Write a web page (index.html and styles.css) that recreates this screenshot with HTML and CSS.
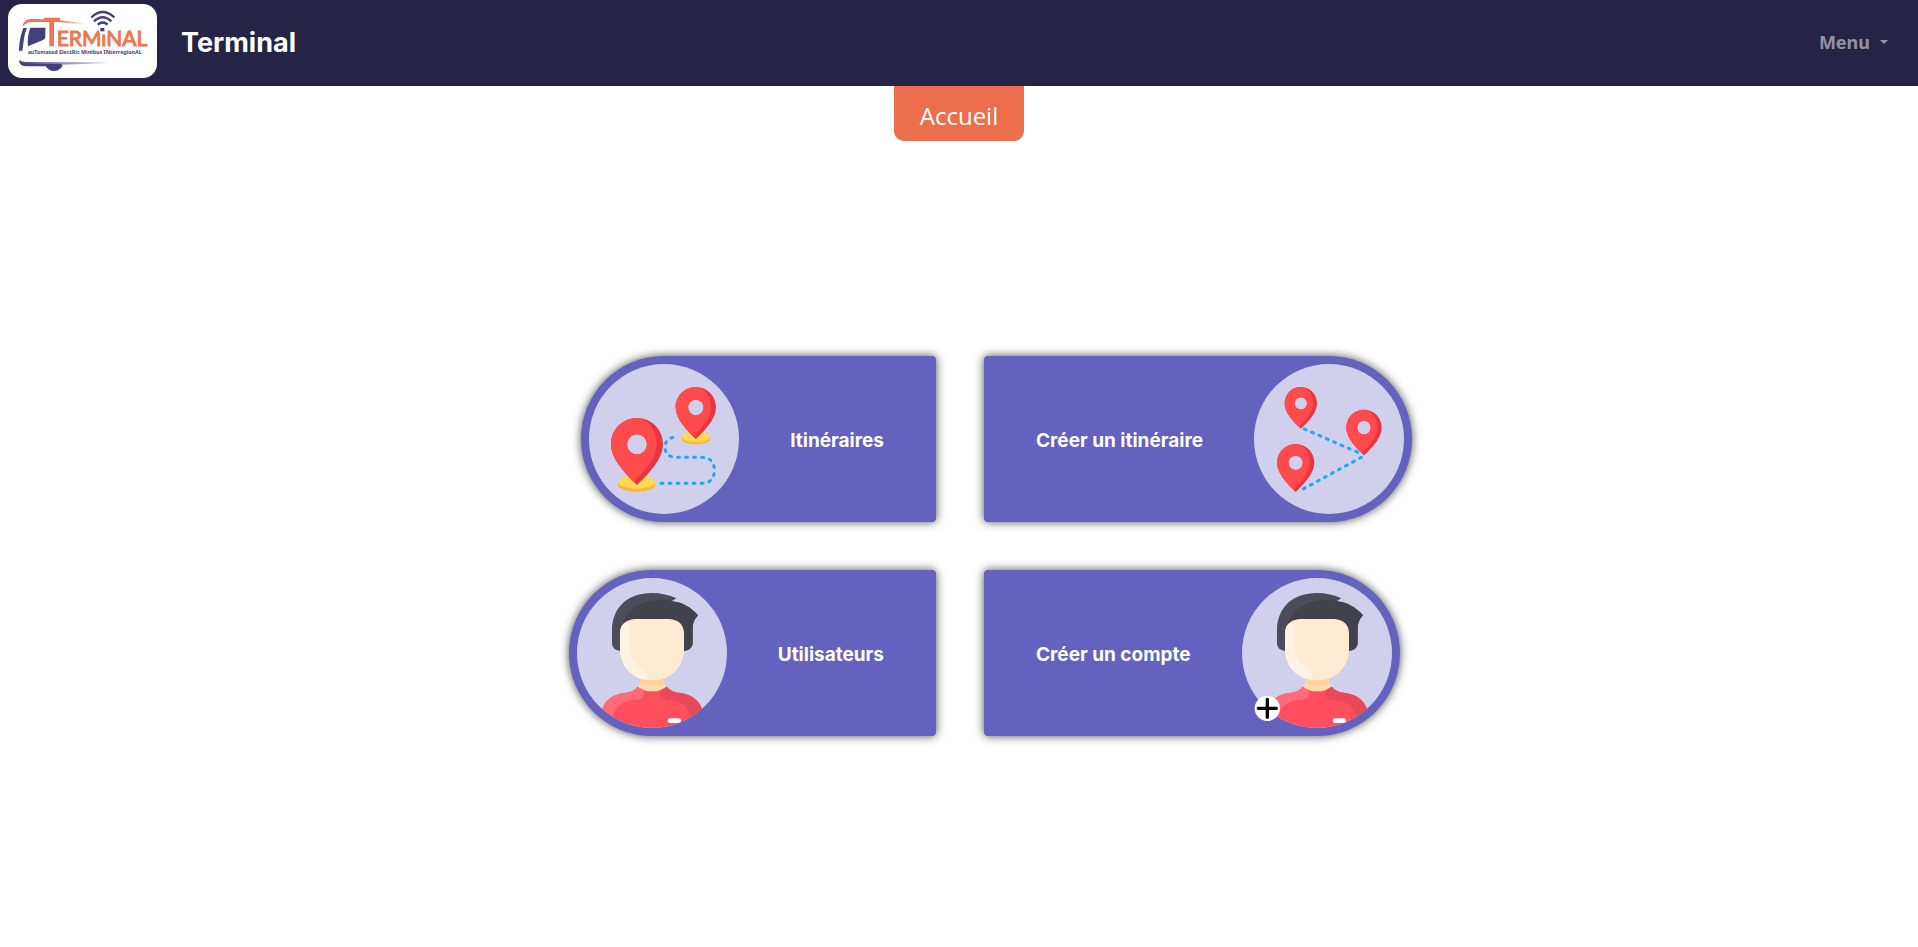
FILE: index.html
```html
<!DOCTYPE html>
<html lang="fr">
<head>
<meta charset="utf-8">
<title>Terminal</title>
<link rel="stylesheet" href="styles.css">
</head>
<body>
<svg class="symbols" aria-hidden="true">
  <symbol id="pin" viewBox="-78 -79 156 201" overflow="visible">
    <path fill="#e8353f" fill-rule="evenodd" d="M0-79C-44-79-78-44-78 0C-78 45-35 88 0 122C35 88 78 45 78 0C78-44 44-79 0-79ZM0-30A30 30 0 1 1 0 30A30 30 0 1 1 0-30Z"/>
    <path fill="#ff4b4b" fill-rule="evenodd" d="M0-79C-44-79-78-44-78 0C-78 42-42 80-10 112C28 76 59 38 59 0C59-44 34-76 0-79ZM0-30A30 30 0 1 1 0 30A30 30 0 1 1 0-30Z"/>
  </symbol>
  <symbol id="person" viewBox="60 54 450 450">
    <clipPath id="disc"><circle cx="285" cy="279" r="225"/></clipPath>
    <g clip-path="url(#disc)">
      <path fill="#4d4d59" d="M189 272C174 271 165 262 165 248V212C165 140 215 99 284 99C311 99 337 105 358 115L344 124C374 126 401 141 423 166C412 178 407 190 407 204V246C407 262 398 272 381 272Z"/>
      <path fill="#42424c" d="M189 272V220C197 160 244 119 310 119C324 119 334 120 344 124C374 126 401 141 423 166C412 178 407 190 407 204V246C407 262 398 272 381 272Z"/>
      <path fill="#ffdcb0" d="M249 345H322V368Q322 378 331 383Q312 397 285 397Q258 397 240 383Q249 378 249 368Z"/>
      <path fill="#ffd19c" d="M249 350H322V371Q285 382 249 371Z"/>
      <path fill="#ff4f5e" d="M242 380Q260 394 285 394Q311 394 329 380Q343 397 366 398C402 402 430 420 435 455V510H134V455C140 421 171 400 208 398Q231 395 242 380Z"/>
      <path fill="#ff6b78" d="M242 380L257 390Q265 400 257 412C249 420 237 419 226 420C196 423 174 443 166 472L134 460C136 421 171 400 208 398Q231 395 242 380Z"/>
      <path fill="#e84858" d="M329 380L314 389Q305 400 314 413C322 420 333 419 344 420C374 423 396 443 404 472L438 455C430 420 402 402 366 398Q343 397 329 380Z"/>
      <rect x="332" y="475" width="40" height="14" rx="7" fill="#fff"/>
      <path fill="#ffead2" d="M234 177H337Q381 181 381 222V269C379 325 339 361 285 361C232 361 191 325 189 269V222Q189 181 234 177Z"/>
      <path fill="#fff2e2" d="M189 269V222Q189 197 202 190Q218 185 218 202V251C219 293 234 313 260 329C274 338 274 353 262 358C219 349 191 315 189 269Z"/>
    </g>
  </symbol>
</svg>

<header class="navbar">
  <a class="brand" href="#">
    <svg class="logo" viewBox="24 12 447 222" role="img" aria-label="TERMINAL">
      <defs>
        <linearGradient id="fadeOrange"><stop offset="0" stop-color="#f07550"/><stop offset="1" stop-color="#f07550" stop-opacity="0.2"/></linearGradient>
        <linearGradient id="fadeNavy"><stop offset="0" stop-color="#413f7e"/><stop offset="0.4" stop-color="#8f8db8"/><stop offset="1" stop-color="#413f7e" stop-opacity="0.1"/></linearGradient>
      </defs>
      <path fill="#f07550" d="M68 80C70 64 78 58 92 57L132 58V53H180V66H162V139H148V66H96C82 66 78 70 68 80Z"/>
      <path fill="url(#fadeOrange)" d="M180 61L248 69V72L180 67Z"/>
      <path fill="#413f7e" d="M70 84H81C72 103 71 128 67 152H57C57 132 62 104 70 84Z"/>
      <path fill="#413f7e" d="M91 83H136V112Q135 118 129 120L84 139C82 120 84 101 91 83Z"/>
      <path fill="url(#fadeNavy)" d="M57 179Q66 186 78 186L318 187V190L180 194H78Q60 193 57 179Z"/>
      <path fill="#413f7e" d="M57 183Q64 191 78 191H180Q188 192 187 199Q178 213 161 213Q146 213 137 199H76Q59 198 57 183Z"/>
      <g fill="none" stroke="#413f7e" stroke-width="7">
        <path d="M274 52Q308 20 343 52"/>
        <path d="M282 64Q308 39 334 64"/>
        <path d="M293 74Q308 61 323 74"/>
      </g>
      <text class="logo-name" x="170" y="138">ERMiNAL</text>
      <rect x="297" y="81" width="20" height="18" fill="#fff"/>
      <rect x="301" y="84" width="12" height="10" fill="#413f7e"/>
      <text class="logo-tagline" x="83" y="163">auTomated ElectRic Minibus INterregionAL</text>
    </svg>
    <span class="brand-name">Terminal</span>
  </a>
  <nav>
    <button class="menu-toggle" type="button" aria-haspopup="true">Menu<span class="caret"></span></button>
  </nav>
</header>

<h1 class="page-tab">Accueil</h1>

<main class="home">
  <div class="tiles">
    <a class="tile tile-left" href="#">
      <svg class="tile-icon" viewBox="63 57 450 450" aria-hidden="true">
        <ellipse cx="384" cy="281" rx="43" ry="17" fill="#fdb927"/>
        <ellipse cx="384" cy="275" rx="42" ry="16" fill="#ffd955"/>
        <ellipse cx="206" cy="419" rx="56" ry="22" fill="#fdb927"/>
        <ellipse cx="206" cy="411" rx="55" ry="20" fill="#ffd955"/>
        <path class="route" d="M279 415H401Q439 414 439 376Q439 338 401 337H325Q291 336 291 307Q292 277 323 277"/>
        <use href="#pin" x="129" y="219" width="156" height="201"/>
        <use href="#pin" x="323" y="126" width="121" height="156"/>
      </svg>
      <span class="tile-label">Itinéraires</span>
    </a>
    <a class="tile tile-right" href="#">
      <span class="tile-label">Créer un itinéraire</span>
      <svg class="tile-icon" viewBox="846 57 450 450" aria-hidden="true">
        <path class="route" d="M997 252L1164 325"/>
        <path class="route" d="M1168 337L988 435"/>
        <use href="#pin" x="938" y="126" width="97" height="125"/>
        <use href="#pin" x="1123" y="194" width="106" height="137"/>
        <use href="#pin" x="915" y="297" width="112" height="144"/>
      </svg>
    </a>
    <a class="tile tile-left" href="#">
      <svg class="tile-icon" viewBox="0 0 450 450" aria-hidden="true">
        <use href="#person" width="450" height="450"/>
      </svg>
      <span class="tile-label">Utilisateurs</span>
    </a>
    <a class="tile tile-right" href="#">
      <span class="tile-label">Créer un compte</span>
      <svg class="tile-icon" viewBox="0 0 450 450" aria-hidden="true">
        <use href="#person" width="450" height="450"/>
        <circle cx="76" cy="391" r="38" fill="#fff"/>
        <path d="M76 364V418M49 391H103" stroke="#000" stroke-width="10" stroke-linecap="round"/>
      </svg>
    </a>
  </div>
</main>
</body>
</html>
```
FILE: styles.css
```css
* {
  box-sizing: border-box;
}

body {
  margin: 0;
  min-height: 100vh;
  display: flex;
  flex-direction: column;
  background: #fff;
  font-family: "Open Sans", "Noto Sans", sans-serif;
}

.symbols {
  position: absolute;
  width: 0;
  height: 0;
}

.navbar {
  display: flex;
  align-items: center;
  justify-content: space-between;
  padding: 4px 30px 8px 8px;
  background: #262446;
}

.brand {
  display: flex;
  align-items: center;
  gap: 24px;
  color: #fff;
  text-decoration: none;
}

.logo {
  width: 149px;
  height: 74px;
  border-radius: 14px;
  background: #fff;
}

.logo-name {
  font: 400 63px Lato, sans-serif;
  fill: #f07550;
  stroke: #f07550;
  stroke-width: 3px;
}

.logo-tagline {
  font: 700 16px "Noto Sans", sans-serif;
  fill: #413f7e;
}

.brand-name {
  padding-top: 4px;
  font: 700 27px/36px Inter, "Liberation Sans", sans-serif;
}

.menu-toggle {
  display: flex;
  align-items: center;
  gap: 10px;
  padding: 2px 0 0;
  border: 0;
  background: none;
  color: #9392a3;
  font: 700 18px/24px "Noto Sans", sans-serif;
}

.caret {
  border: 4px solid transparent;
  border-top-color: currentColor;
  border-bottom: 0;
}

.page-tab {
  align-self: center;
  margin: 0;
  padding: 12px 26px 7px;
  border-radius: 0 0 10px 10px;
  background: #ed6e4c;
  color: #fff;
  font: 400 24px/36px "Open Sans", "Noto Sans", sans-serif;
}

.home {
  flex: 1;
  display: flex;
  align-items: center;
  justify-content: center;
  padding: 4px 0 0 2px;
}

.tiles {
  display: grid;
  grid-template-columns: 1fr 1fr;
  gap: 48px;
}

.tile {
  display: flex;
  align-items: center;
  gap: 51px;
  padding: 8px;
  background: #6561be;
  box-shadow: 0 0 10px rgba(0, 0, 0, 0.7);
  color: #fff;
  text-decoration: none;
}

.tile-left {
  justify-self: end;
  padding-right: 52px;
  border-radius: 83px 4px 4px 83px;
}

.tile-right {
  justify-self: start;
  padding-left: 52px;
  border-radius: 4px 83px 83px 4px;
}

.tile-icon {
  width: 150px;
  height: 150px;
  border-radius: 50%;
  background: #d0cfec;
  overflow: visible;
}

.tile-label {
  padding-top: 4px;
  font: 700 19px/28px Inter, "Liberation Sans", sans-serif;
}

.route {
  fill: none;
  stroke: #20a8ef;
  stroke-width: 9px;
  stroke-linecap: round;
  stroke-dasharray: 6 18;
}
```
